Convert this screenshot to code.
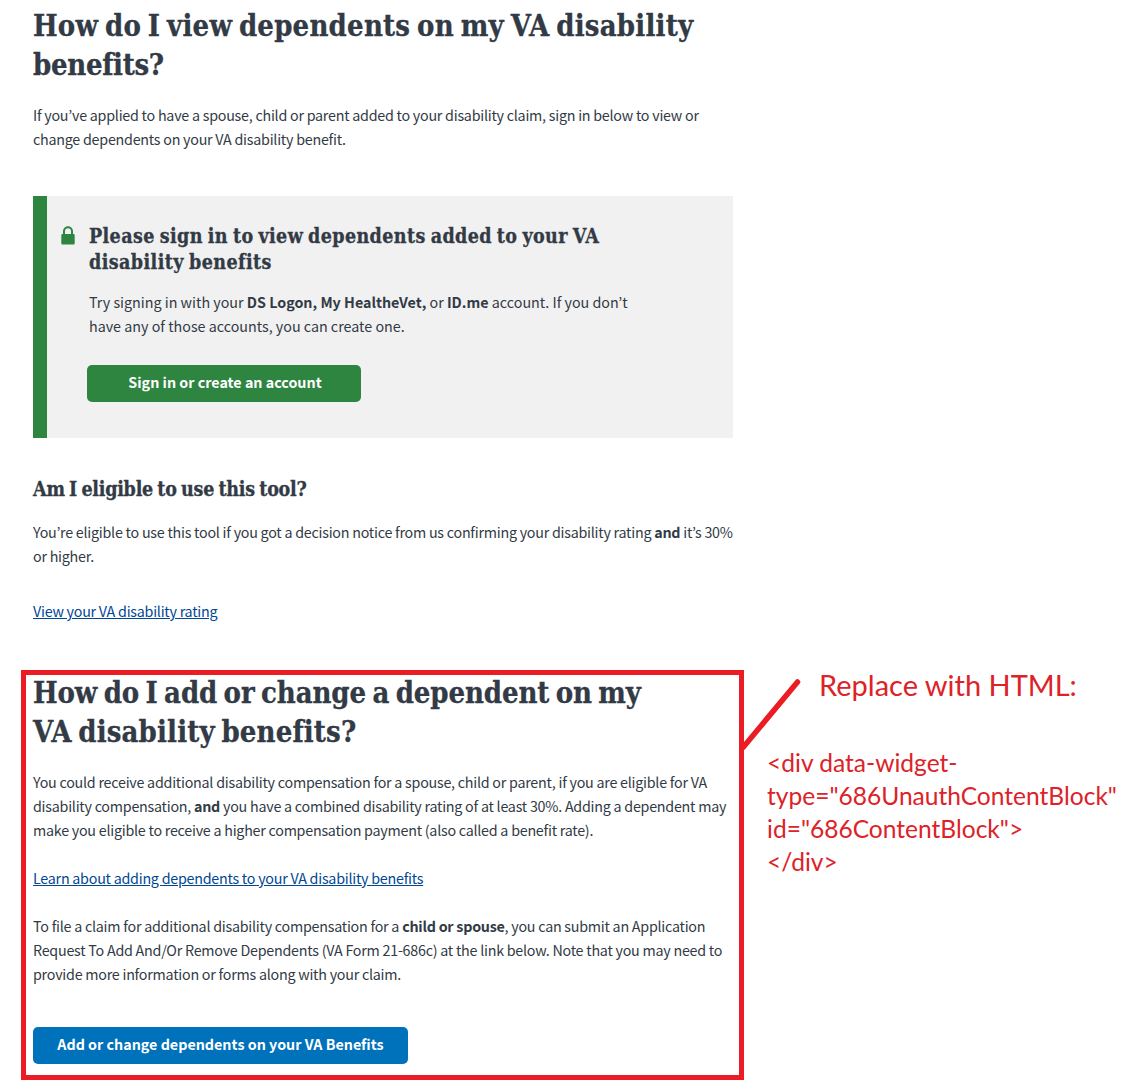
<div class="page">
  <main>
    <section class="view">
      <h1><span class="t1">How do I view dependents on my VA disability</span><br /><span class="t2">benefits?</span></h1>
      <p class="intro">If you’ve applied to have a spouse, child or parent added to your disability claim, sign in below to view or<br />change dependents on your VA disability benefit.</p>
      <div class="signin">
        <svg class="lock" viewBox="0 0 14 19" aria-hidden="true"><path d="M3 9V5.2a4 4 0 0 1 8 0V9" fill="none" stroke="#2e8540" stroke-width="2" /><rect x="0.3" y="8" width="13.4" height="10.4" rx="1" fill="#2e8540" /></svg>
        <div>
          <h2><span class="s1">Please sign in to view dependents added to your VA</span><br /><span class="s2">disability benefits</span></h2>
          <p>Try signing in with your <b>DS Logon, My HealtheVet,</b> or <b>ID.me</b> account. If you don’t<br />have any of those accounts, you can create one.</p>
          <button class="green">Sign in or create an account</button>
        </div>
      </div>
      <h2 class="eligible">Am I eligible to use this tool?</h2>
      <p>You’re eligible to use this tool if you got a decision notice from us confirming your disability rating <b>and</b> it’s 30%<br />or higher.</p>
      <a href="#rating">View your VA disability rating</a>
    </section>
    <section class="change">
      <h1><span class="t3">How do I add or change a dependent on my</span><br /><span class="t4">VA disability benefits?</span></h1>
      <p>You could receive additional disability compensation for a spouse, child or parent, if you are eligible for VA<br />disability compensation, <b>and</b> you have a combined disability rating of at least 30%. Adding a dependent may<br />make you eligible to receive a higher compensation payment (also called a benefit rate).</p>
      <a href="#learn">Learn about adding dependents to your VA disability benefits</a>
      <p class="file">To file a claim for additional disability compensation for a <b>child or spouse</b>, you can submit an Application<br />Request To Add And/Or Remove Dependents (VA Form 21-686c) at the link below. Note that you may need to<br />provide more information or forms along with your claim.</p>
      <button class="blue">Add or change dependents on your VA Benefits</button>
    </section>
  </main>
  <aside>
    <div class="note">Replace with HTML:</div>
    <div class="code">{'<div data-widget-'}<br />type="686UnauthContentBlock"<br />id="686ContentBlock"{'>'}<br />{'</div>'}</div>
  </aside>
  <svg class="pointer" viewBox="0 0 64 76" aria-hidden="true"><path d="M3 72.5L57.5 7" stroke="#ec1c24" stroke-width="5.5" stroke-linecap="round" /></svg>
</div>

<style>
  :global(body) { margin: 0; background: #fff; }
  .page { position: relative; display: flex; width: 1147px; height: 1086px; overflow: hidden; color: #323a45; font-family: "Noto Sans CJK KR", sans-serif; font-size: 14.3px; line-height: 24px; letter-spacing: -0.245px; white-space: nowrap; }
  main { width: 723px; padding-left: 21px; flex: none; }
  h1, h2, p { margin: 0; }
  h1, h2 { font-family: "DejaVu Serif Condensed", "DejaVu Serif", serif; font-stretch: condensed; font-weight: 700; -webkit-text-stroke: 0.3px #323a45; }
  h1 { font-size: 29px; line-height: 39px; word-spacing: -2.5px; }
  h2 { font-size: 19.5px; line-height: 26px; word-spacing: -1.5px; }
  .t1 { letter-spacing: 0.22px; }
  .t2 { letter-spacing: -0.3px; }
  .t3 { letter-spacing: -0.11px; }
  .t4 { letter-spacing: 0.15px; }
  .s1 { letter-spacing: 0.38px; }
  .s2 { letter-spacing: 0.42px; }
  .view { padding: 7px 0 0 12px; height: 664px; box-sizing: border-box; }
  .intro { margin-top: 18px; }
  .signin { display: flex; box-sizing: border-box; width: 700px; height: 242px; margin-top: 45px; padding: 28px 0 0 14px; gap: 14px; border-left: 14px solid #2e8540; background: #f1f1f1; letter-spacing: 0; }
  .lock { width: 14px; height: 19px; margin-top: 2px; }
  .signin p { margin-top: 14px; }
  button { display: block; box-sizing: border-box; height: 37px; padding: 0 0 4px; border: 0; border-radius: 5px; color: #fff; font: 700 14.3px/33px "Noto Sans CJK KR", sans-serif; }
  .green { width: 274px; margin: 27px 0 0 -2px; padding-left: 2px; background: #2e8540; }
  .eligible { margin: 39px 0 17px; letter-spacing: -0.24px; }
  a { display: block; margin-top: 31px; color: #004795; text-decoration: underline; }
  .change { box-sizing: border-box; width: 723px; height: 410px; margin-top: 6px; padding: 0 0 0 7px; border: 5px solid #ec1c24; }
  .change h1 { margin-top: -1px; }
  .change p { margin-top: 18px; }
  .change a { margin-top: 24px; }
  .change .file { margin-top: 24px; }
  .blue { width: 375px; margin-top: 41px; background: #0071bb; }
  aside { padding: 667px 0 0 23px; color: #dd2228; font-family: Lato, sans-serif; letter-spacing: 0; }
  .note { padding-left: 52px; font-size: 29px; line-height: 36px; }
  .code { margin-top: 43px; font-size: 24.55px; line-height: 33px; }
  .pointer { position: absolute; left: 740px; top: 675px; width: 64px; height: 76px; }
</style>
